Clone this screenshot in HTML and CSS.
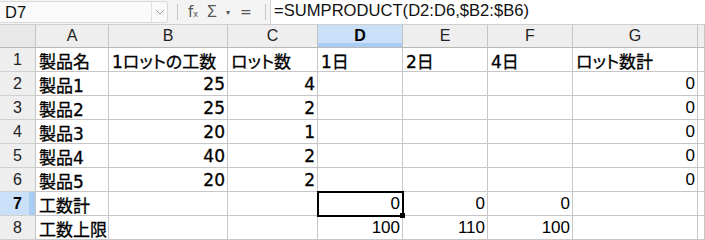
FILE: index.html
```html
<!DOCTYPE html>
<html lang="ja">
<head>
  <meta charset="UTF-8">
  <title>工数計算</title>
  <link rel="stylesheet" href="styles.css">
</head>
<body>

<div class="toolbar">
  <div class="namebox">
    <span class="name">D7</span>
    <span class="drop">
      <svg width="10" height="6" viewBox="0 0 10 6"><path d="M1 1 L5 5 L9 1" fill="none" stroke="#9a9a9a" stroke-width="1"/></svg>
    </span>
  </div>
  <span class="sep first"></span>
  <div class="tools">
    <span class="fx">f<small>x</small></span>
    <span class="sigma">&Sigma;</span>
    <span class="tri">&#9662;</span>
    <span class="eq">=</span>
  </div>
  <span class="sep"></span>
  <div class="formula">=SUMPRODUCT(D2:D6,$B2:$B6)</div>
</div>

<div class="sheet">
  <!-- ヘッダー -->
  <div class="corner"></div>
  <div class="colhead">A</div>
  <div class="colhead">B</div>
  <div class="colhead">C</div>
  <div class="colhead active">D</div>
  <div class="colhead">E</div>
  <div class="colhead">F</div>
  <div class="colhead">G</div>
  <div class="colhead"></div>

  <div class="rowhead">1</div>
  <div class="cell jp">製品名</div>
  <div class="cell jp">1ロットの工数</div>
  <div class="cell jp">ロット数</div>
  <div class="cell jp">1日</div>
  <div class="cell jp">2日</div>
  <div class="cell jp">4日</div>
  <div class="cell jp">ロット数計</div>
  <div class="cell"></div>

  <div class="rowhead">2</div>
  <div class="cell jp">製品1</div>
  <div class="cell jp num">25</div>
  <div class="cell jp num">4</div>
  <div class="cell"></div>
  <div class="cell"></div>
  <div class="cell"></div>
  <div class="cell num">0</div>
  <div class="cell"></div>

  <div class="rowhead">3</div>
  <div class="cell jp">製品2</div>
  <div class="cell jp num">25</div>
  <div class="cell jp num">2</div>
  <div class="cell"></div>
  <div class="cell"></div>
  <div class="cell"></div>
  <div class="cell num">0</div>
  <div class="cell"></div>

  <div class="rowhead">4</div>
  <div class="cell jp">製品3</div>
  <div class="cell jp num">20</div>
  <div class="cell jp num">1</div>
  <div class="cell"></div>
  <div class="cell"></div>
  <div class="cell"></div>
  <div class="cell num">0</div>
  <div class="cell"></div>

  <div class="rowhead">5</div>
  <div class="cell jp">製品4</div>
  <div class="cell jp num">40</div>
  <div class="cell jp num">2</div>
  <div class="cell"></div>
  <div class="cell"></div>
  <div class="cell"></div>
  <div class="cell num">0</div>
  <div class="cell"></div>

  <div class="rowhead">6</div>
  <div class="cell jp">製品5</div>
  <div class="cell jp num">20</div>
  <div class="cell jp num">2</div>
  <div class="cell"></div>
  <div class="cell"></div>
  <div class="cell"></div>
  <div class="cell num">0</div>
  <div class="cell"></div>

  <div class="rowhead active">7</div>
  <div class="cell jp">工数計</div>
  <div class="cell"></div>
  <div class="cell"></div>
  <div class="cell num sel">0</div>
  <div class="cell num">0</div>
  <div class="cell num">0</div>
  <div class="cell"></div>
  <div class="cell"></div>

  <div class="rowhead">8</div>
  <div class="cell jp">工数上限</div>
  <div class="cell"></div>
  <div class="cell"></div>
  <div class="cell num">100</div>
  <div class="cell num">110</div>
  <div class="cell num">100</div>
  <div class="cell"></div>
  <div class="cell"></div>
</div>

</body>
</html>
```

FILE: styles.css
```css
body {
  margin: 0;
  padding: 0;
  font-family: 'Liberation Sans', Arial, sans-serif;
  background-color: #ffffff;
  overflow: hidden;
}

/* 数式バー */
.toolbar {
  display: flex;
  align-items: center;
  height: 24px;
  background-color: #f3f3f3;
  border-bottom: 1px solid #cfcfcf;
}

.namebox {
  display: flex;
  align-items: stretch;
  width: 168px;
  height: 22px;
  box-sizing: border-box;
  background-color: #fafafa;
  border: 1px solid #dadada;
  border-left: none;
  border-radius: 0 3px 3px 0;
}

.name {
  flex: 1;
  padding-left: 5px;
  font-size: 16.5px;
  line-height: 20px;
  color: #111;
}

.drop {
  display: flex;
  align-items: center;
  justify-content: center;
  width: 15px;
  border-left: 1px solid #e2e2e2;
}

.sep {
  width: 1px;
  height: 16px;
  margin: 0 4px 0 0;
  background-color: #c8c8c8;
}

.sep.first {
  margin-left: 9px;
}

.tools {
  display: flex;
  align-items: center;
  width: 83px;
  color: #555;
  font-family: 'DejaVu Sans', sans-serif;
}

.fx {
  margin-left: 6px;
  font-size: 15px;
}

.fx small {
  font-size: 8px;
}

.sigma {
  margin-left: 9px;
  font-family: 'Liberation Sans', sans-serif;
  font-size: 16px;
}

.tri {
  margin-left: 9px;
  font-size: 8px;
}

.eq {
  margin-left: 10px;
  font-size: 14px;
}

.formula {
  flex: 1;
  height: 24px;
  box-sizing: border-box;
  padding-left: 3px;
  background-color: #ffffff;
  border-left: 1px solid #d4d4d4;
  font-size: 16.6px;
  line-height: 22px;
  color: #111;
}

/* シート */
.sheet {
  display: grid;
  grid-template-columns: 36px 73px 119px 90px 85px 85px 85px 125px 1fr;
  grid-template-rows: 23px repeat(8, 24px);
}

.corner,
.colhead,
.rowhead {
  box-sizing: border-box;
  background-color: #eeeeee;
  border-right: 1px solid #c4c4c4;
  border-bottom: 1px solid #b8b8b8;
  color: #222;
  font-size: 16px;
}

.corner {
  background-color: #e8e8e8;
}

.colhead {
  display: flex;
  align-items: center;
  justify-content: center;
}

.rowhead {
  display: flex;
  align-items: center;
  justify-content: center;
  border-bottom: 1px solid #d0d0d0;
}

.colhead.active {
  background-color: #c9e0f8;
  box-shadow: inset 0 -4px 0 #a8ccf2;
  font-weight: bold;
  color: #000;
}

.rowhead.active {
  background-color: #c9e0f8;
  box-shadow: inset -6px 0 0 #a8ccf2;
  font-weight: bold;
  color: #000;
}

.cell {
  box-sizing: border-box;
  display: flex;
  align-items: center;
  padding: 1px 3px 0 3px;
  border-right: 1px solid #c6c6c6;
  border-bottom: 1px solid #c6c6c6;
  font-size: 17px;
  color: #000;
  white-space: nowrap;
  overflow: hidden;
}

.jp {
  font-family: 'DejaVu Sans', 'Noto Sans CJK JP', sans-serif;
  font-feature-settings: "palt";
  font-size: 17px;
  -webkit-text-stroke: 0.3px #000;
}

.num {
  justify-content: flex-end;
  padding-right: 2px;
}

.sel {
  position: relative;
  overflow: visible;
  outline: 2px solid #000;
  outline-offset: -1px;
}

.sel::after {
  content: "";
  position: absolute;
  right: -3px;
  bottom: -3px;
  width: 5px;
  height: 5px;
  background-color: #000;
}
```
